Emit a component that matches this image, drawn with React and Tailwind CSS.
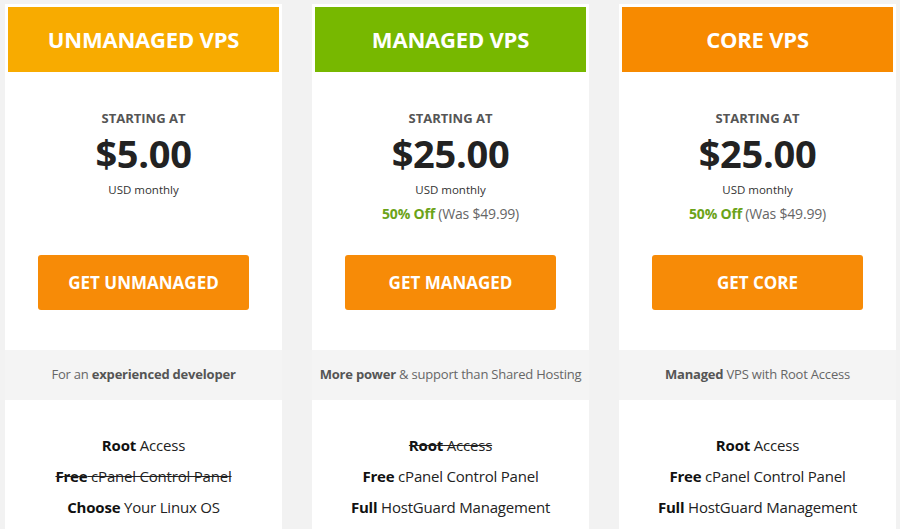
const plans = [
  {
    name: 'UNMANAGED VPS',
    color: 'bg-[#f8ab00]',
    price: '$5.00',
    discount: false,
    cta: 'GET UNMANAGED',
    tagline: (
      <>
        For an <b className="font-bold text-[#555]">experienced developer</b>
      </>
    ),
    features: [
      { bold: 'Root', rest: ' Access' },
      { bold: 'Free', rest: ' cPanel Control Panel', struck: true },
      { bold: 'Choose', rest: ' Your Linux OS' },
    ],
  },
  {
    name: 'MANAGED VPS',
    color: 'bg-[#77b800]',
    price: '$25.00',
    discount: true,
    cta: 'GET MANAGED',
    tagline: (
      <>
        <b className="font-bold text-[#555]">More power</b> &amp; support than Shared Hosting
      </>
    ),
    features: [
      { bold: 'Root', rest: ' Access', struck: true },
      { bold: 'Free', rest: ' cPanel Control Panel' },
      { bold: 'Full', rest: ' HostGuard Management' },
    ],
  },
  {
    name: 'CORE VPS',
    color: 'bg-[#f78a00]',
    price: '$25.00',
    discount: true,
    cta: 'GET CORE',
    tagline: (
      <>
        <b className="font-bold text-[#555]">Managed</b> VPS with Root Access
      </>
    ),
    features: [
      { bold: 'Root', rest: ' Access' },
      { bold: 'Free', rest: ' cPanel Control Panel' },
      { bold: 'Full', rest: ' HostGuard Management' },
    ],
  },
];

function PlanCard({ plan }) {
  return (
    <div className="w-[277px] shrink-0 bg-white">
      <div className="p-[3px] pb-0">
        <div className={`${plan.color} h-[65px] flex items-center justify-center`}>
          <h2 className="text-white text-[22px] font-bold tracking-[-0.2px]">{plan.name}</h2>
        </div>
      </div>

      <div className="pt-[36px] flex flex-col items-center text-center">
        <div className="h-[147px] flex flex-col items-center">
          <p className="text-[13px] leading-[20px] font-bold text-[#555]">STARTING AT</p>
          <p className="text-[38px] leading-[40px] font-bold text-[#222] mt-[5px] tracking-[-0.3px]">
            {plan.price}
          </p>
          <p className="text-[11.5px] leading-[16px] text-[#333] mt-[9px]">USD monthly</p>
          {plan.discount && (
            <p className="text-[14px] leading-[20px] text-[#666] mt-[6px] tracking-[-0.2px]">
              <span className="font-bold text-[#6ba319]">50% Off</span> (Was $49.99)
            </p>
          )}
        </div>
        <button className="w-[211px] h-[55px] rounded-[3px] bg-[#f78b07] text-white text-[17px] font-bold">
          {plan.cta}
        </button>
      </div>

      <div className="h-[40px]" />

      <div className="h-[50px] bg-[#f4f4f4] flex items-center justify-center text-[13px] text-[#666] tracking-[-0.2px] whitespace-nowrap">
        <p>{plan.tagline}</p>
      </div>

      <ul className="pt-[30px] pb-[20px] text-center text-[15px] leading-[31px] text-[#222] tracking-[-0.2px]">
        {plan.features.map((f, i) => (
          <li key={i} className={f.struck ? 'line-through' : ''}>
            <b className="font-bold text-[#111]">{f.bold}</b>
            {f.rest}
          </li>
        ))}
      </ul>
    </div>
  );
}

export default function App() {
  return (
    <div
      className="min-h-screen bg-[#f2f2f2] pt-[4px] pl-[5px] flex gap-[30px] overflow-hidden"
      style={{ fontFamily: '"Open Sans", "Liberation Sans", sans-serif' }}
    >
      {plans.map((p) => (
        <PlanCard key={p.name} plan={p} />
      ))}
    </div>
  );
}
